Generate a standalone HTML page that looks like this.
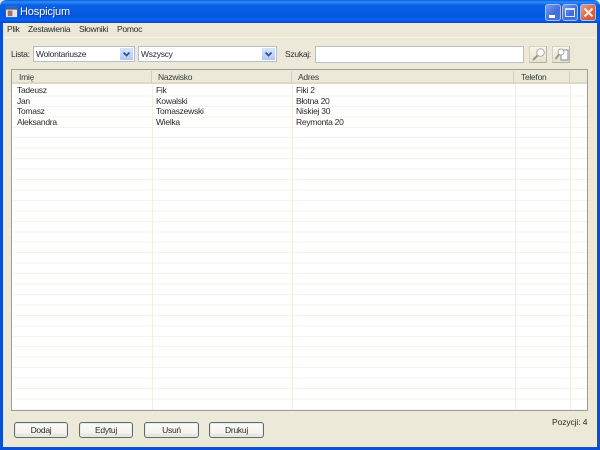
<!DOCTYPE html>
<html><head><meta charset="utf-8"><style>
html,body{margin:0;padding:0;width:600px;height:450px;overflow:hidden;background:#ece9d8}
*{box-sizing:border-box}
body{font-family:"Liberation Sans",sans-serif;font-size:8.5px;letter-spacing:-.27px;color:#2a2a2a;position:relative}
.a{position:absolute;white-space:nowrap}
.tb{left:0;top:0;width:600px;height:23px;background:linear-gradient(#0a5ce0 0,#2f8cf5 2px,#0a62e6 5px,#0358e0 16px,#0a62ee 20px,#0046c8 23px);border-radius:6px 6px 0 0}
.side{background:#0a4fd8;top:23px;bottom:0;width:3px}
.cb{background:#fff;border:1px solid #b5c0cc;height:16px;line-height:15px;padding-left:2px;font-size:8.5px}
.cb i{position:absolute;right:1px;top:1px;width:13px;height:12px;background:linear-gradient(#d8e4fa,#b3c8f0)}
.btn{border:1px solid #5c6c6c;border-radius:3px;background:linear-gradient(#fbfbf8,#f4f3ee 70%,#dcd9cc);height:16px;line-height:15px;text-align:center;top:422px;font-size:8.5px;box-shadow:inset 0 0 0 1px #e6eaec}
.wb{top:4px;width:16px;height:17px;border:1px solid #a9c0ee;border-radius:3px;background:linear-gradient(135deg,#7a9aea,#3f6cdc 60%,#4a76dc)}
.ib{top:46px;width:18px;height:17px;background:linear-gradient(#f8f7f0,#e5e2d2);border:1px solid #d5d2c2;border-bottom-color:#b5b3a2;border-right-color:#b5b3a2}
.tx{font-size:8.5px;line-height:11px}
.hd{color:#3a3a3a;top:72px}
.v{top:85px;width:1px;height:325px;background:#f2f0e4}
.h{top:71px;width:1px;height:13px;background:#d2cfbe}
</style></head><body>
<div class="a tb"></div>
<div class="a side" style="left:0"></div>
<div class="a side" style="right:0"></div>
<div class="a" style="left:0;bottom:0;width:600px;height:3px;background:#0a4fd8"></div>

<svg class="a" style="left:5px;top:5px" width="13" height="13" viewBox="0 0 14 14"><rect x="1" y="2" width="12" height="11" fill="#dfe6f2"/><rect x="1" y="2" width="12" height="3" fill="#3a62a8"/><rect x="3" y="6" width="5" height="6" fill="#a8705a"/><rect x="8" y="6" width="4" height="3" fill="#f3e5c0"/></svg>
<div class="a" style="left:20px;top:5px;color:#fff;font-size:11px;letter-spacing:-.15px;line-height:15px;text-shadow:1px 1px 0 #0a3aa0">Hospicjum</div>
<div class="a wb" style="left:545px"><div class="a" style="left:3px;top:10px;width:6px;height:3px;background:#fff"></div></div>
<div class="a wb" style="left:562px"><div class="a" style="left:2px;top:3px;width:10px;height:9px;border:1px solid #d8e4fa;border-top-width:2px"></div></div>
<div class="a wb" style="left:580px;background:linear-gradient(135deg,#e89a80,#d6603c 65%,#c85a38)"><svg class="a" style="left:2px;top:2px" width="11" height="11"><path d="M1.5 1.5L9.5 9.5M9.5 1.5L1.5 9.5" stroke="#fbe8e0" stroke-width="2.2"/></svg></div>

<div class="a tx" style="left:7px;top:24px">Plik</div>
<div class="a tx" style="left:28px;top:24px">Zestawienia</div>
<div class="a tx" style="left:79px;top:24px">Słowniki</div>
<div class="a tx" style="left:117px;top:24px">Pomoc</div>
<div class="a" style="left:3px;top:37px;width:594px;height:1px;background:#f6f4ea"></div>

<div class="a tx" style="left:11px;top:49px">Lista:</div>
<div class="a cb" style="left:33px;top:46px;width:102px">Wolontariusze<i><svg width="13" height="12"><path d="M3.5 4.5L6.5 7.5L9.5 4.5" fill="none" stroke="#33518f" stroke-width="1.8"/></svg></i></div>
<div class="a cb" style="left:138px;top:46px;width:139px">Wszyscy<i><svg width="13" height="12"><path d="M3.5 4.5L6.5 7.5L9.5 4.5" fill="none" stroke="#33518f" stroke-width="1.8"/></svg></i></div>
<div class="a tx" style="left:285px;top:49px">Szukaj:</div>
<div class="a" style="left:315px;top:46px;width:209px;height:17px;background:#fff;border:1px solid #b5c0cc"></div>
<div class="a ib" style="left:529px"><svg class="a" style="left:1px;top:0" width="15" height="15"><circle cx="9.5" cy="5.5" r="3.8" fill="#fff" stroke="#a8a89a"/><path d="M6.5 8.5L2 13" stroke="#9a9880" stroke-width="2"/></svg></div>
<div class="a ib" style="left:552px"><svg class="a" style="left:1px;top:0" width="15" height="15"><rect x="7" y="3" width="7" height="10" fill="#fff" stroke="#7c8aa0"/><circle cx="7" cy="5" r="3" fill="#fff" stroke="#a8a89a"/><path d="M5 7.5L1.5 12" stroke="#9a9880" stroke-width="2"/></svg></div>

<div class="a" style="left:11px;top:69px;width:577px;height:342px;background:#fff;border:1px solid #9aa19c"></div>
<div class="a" style="left:12px;top:70px;width:575px;height:14px;background:#ece9d8;border-bottom:2px solid #dcd9c9"></div>
<div class="a" style="left:12px;top:85px;width:575px;height:325px;background:repeating-linear-gradient(#fff 0,#fff 9.45px,#f5f3ea 9.45px,#f5f3ea 10.45px);background-position:0 1px"></div>
<div class="a h" style="left:151px"></div><div class="a h" style="left:291px"></div><div class="a h" style="left:513px"></div><div class="a h" style="left:569px"></div>
<div class="a v" style="left:152px"></div><div class="a v" style="left:292px"></div><div class="a v" style="left:515px"></div><div class="a v" style="left:570px"></div>
<div class="a tx hd" style="left:19px">Imię</div>
<div class="a tx hd" style="left:158px">Nazwisko</div>
<div class="a tx hd" style="left:298px">Adres</div>
<div class="a tx hd" style="left:521px">Telefon</div>

<div class="a tx" style="left:17px;top:85px">Tadeusz</div><div class="a tx" style="left:156px;top:85px">Fik</div><div class="a tx" style="left:296px;top:85px">Fiki 2</div>
<div class="a tx" style="left:17px;top:96px">Jan</div><div class="a tx" style="left:156px;top:96px">Kowalski</div><div class="a tx" style="left:296px;top:96px">Błotna 20</div>
<div class="a tx" style="left:17px;top:106px">Tomasz</div><div class="a tx" style="left:156px;top:106px">Tomaszewski</div><div class="a tx" style="left:296px;top:106px">Niskiej 30</div>
<div class="a tx" style="left:17px;top:117px">Aleksandra</div><div class="a tx" style="left:156px;top:117px">Wielka</div><div class="a tx" style="left:296px;top:117px">Reymonta 20</div>

<div class="a btn" style="left:14px;width:54px">Dodaj</div>
<div class="a btn" style="left:79px;width:54px">Edytuj</div>
<div class="a btn" style="left:144px;width:55px">Usuń</div>
<div class="a btn" style="left:209px;width:55px">Drukuj</div>
<div class="a tx" style="left:552px;top:417px;letter-spacing:-.1px">Pozycji: 4</div>
</body></html>
